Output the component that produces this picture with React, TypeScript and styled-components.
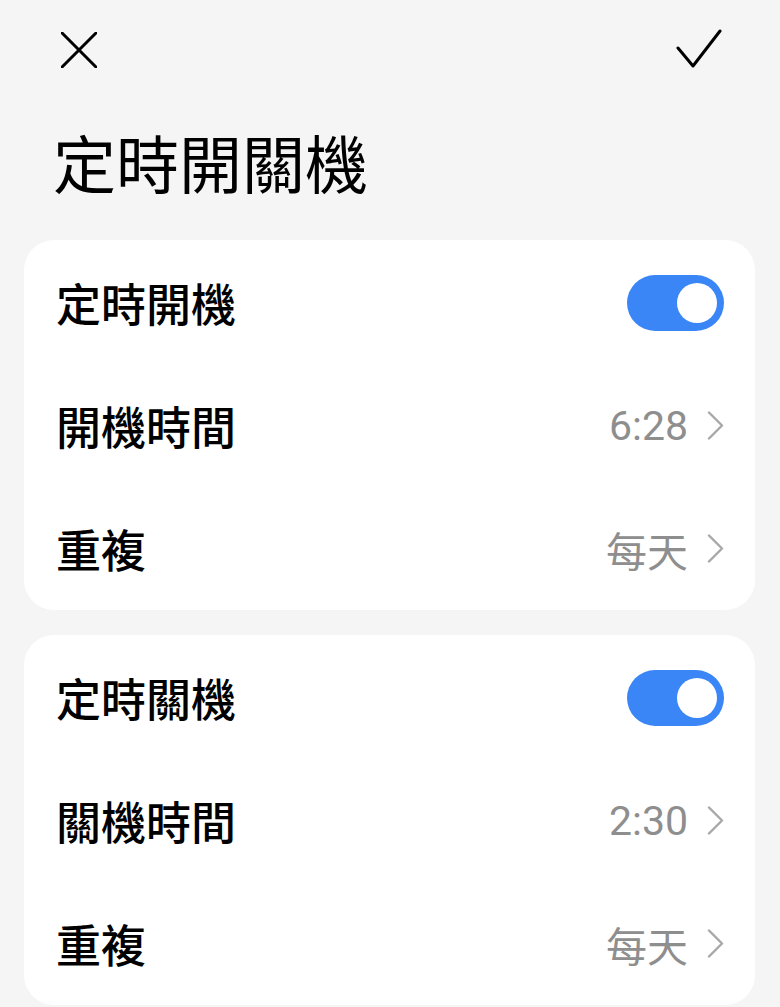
import React from "react";
import styled, { createGlobalStyle } from "styled-components";

const GlobalStyle = createGlobalStyle`
  html, body {
    margin: 0;
    padding: 0;
    background: #f5f5f5;
  }
  body {
    font-family: "Noto Sans CJK TC", "Noto Sans CJK SC", "Noto Sans", sans-serif;
    -webkit-font-smoothing: antialiased;
  }
`;

const Page = styled.div`
  width: 780px;
  min-height: 1007px;
  box-sizing: border-box;
  background: #f5f5f5;
  padding: 0 25px 0 24px;
`;

const TopBar = styled.header`
  height: 100px;
  display: flex;
  align-items: flex-start;
  justify-content: space-between;
  padding: 0 33px 0 37px;
`;

const IconButton = styled.button<{ $top: number }>`
  margin-top: ${(p) => p.$top}px;
  padding: 0;
  border: 0;
  background: none;
  display: flex;
  cursor: pointer;
  color: #000;
`;

const Title = styled.h1`
  margin: 0;
  height: 140px;
  display: flex;
  align-items: center;
  padding-left: 29px;
  padding-bottom: 20px;
  box-sizing: border-box;
  font-size: 63px;
  font-weight: 400;
  color: #000;
  letter-spacing: 0;
`;

const Card = styled.section`
  background: #ffffff;
  border-radius: 30px;
  height: 370px;
  box-sizing: border-box;
  padding: 1px 31px 0 32px;
  display: flex;
  flex-direction: column;
  & + & {
    margin-top: 25px;
  }
`;

const Row = styled.div`
  flex: 0 0 123px;
  display: flex;
  align-items: center;
  justify-content: space-between;
`;

const Label = styled.span`
  font-size: 45px;
  font-weight: 500;
  color: #000;
`;

const ValueGroup = styled.div`
  display: flex;
  align-items: center;
  gap: 19px;
`;

const Value = styled.span`
  font-family: Roboto, "Noto Sans CJK TC", sans-serif;
  font-size: 41px;
  font-weight: 400;
  color: #8e8e8e;
`;

const Track = styled.div<{ $on: boolean }>`
  width: 97px;
  height: 56px;
  border-radius: 28px;
  background: ${(p) => (p.$on ? "#3b86f7" : "#d8d8d8")};
  display: flex;
  align-items: center;
  justify-content: ${(p) => (p.$on ? "flex-end" : "flex-start")};
  padding: 0 7px 0 8px;
  box-sizing: border-box;
`;

const Knob = styled.div`
  width: 40px;
  height: 40px;
  border-radius: 50%;
  background: #ffffff;
`;

const CloseIcon = () => (
  <svg width="36" height="36" viewBox="0 0 36 36" fill="none">
    <path d="M1 1 L35 35 M35 1 L1 35" stroke="#000" strokeWidth="3" strokeLinecap="round" />
  </svg>
);

const CheckIcon = () => (
  <svg width="46" height="40" viewBox="0 0 46 40" fill="none">
    <path d="M2 19 L17 37 L44 2" stroke="#000" strokeWidth="3" strokeLinecap="round" strokeLinejoin="round" />
  </svg>
);

const Chevron = () => (
  <svg width="17" height="29" viewBox="0 0 17 29" fill="none">
    <path d="M2 1.5 L15 14.5 L2 27.5" stroke="#a8a8a8" strokeWidth="2.4" strokeLinecap="round" strokeLinejoin="round" />
  </svg>
);

const Toggle = ({ on }: { on: boolean }) => (
  <Track $on={on} role="switch" aria-checked={on}>
    <Knob />
  </Track>
);

type Schedule = {
  title: string;
  timeLabel: string;
  time: string;
  repeat: string;
};

const schedules: Schedule[] = [
  { title: "定時開機", timeLabel: "開機時間", time: "6:28", repeat: "每天" },
  { title: "定時關機", timeLabel: "關機時間", time: "2:30", repeat: "每天" },
];

const LinkRow = ({ label, value }: { label: string; value: string }) => (
  <Row>
    <Label>{label}</Label>
    <ValueGroup>
      <Value>{value}</Value>
      <Chevron />
    </ValueGroup>
  </Row>
);

export default function App() {
  return (
    <>
      <GlobalStyle />
      <Page>
        <TopBar>
          <IconButton $top={32} aria-label="取消">
            <CloseIcon />
          </IconButton>
          <IconButton $top={29} aria-label="確定">
            <CheckIcon />
          </IconButton>
        </TopBar>
        <Title>定時開關機</Title>
        {schedules.map((s) => (
          <Card key={s.title}>
            <Row>
              <Label>{s.title}</Label>
              <Toggle on />
            </Row>
            <LinkRow label={s.timeLabel} value={s.time} />
            <LinkRow label="重複" value={s.repeat} />
          </Card>
        ))}
      </Page>
    </>
  );
}
